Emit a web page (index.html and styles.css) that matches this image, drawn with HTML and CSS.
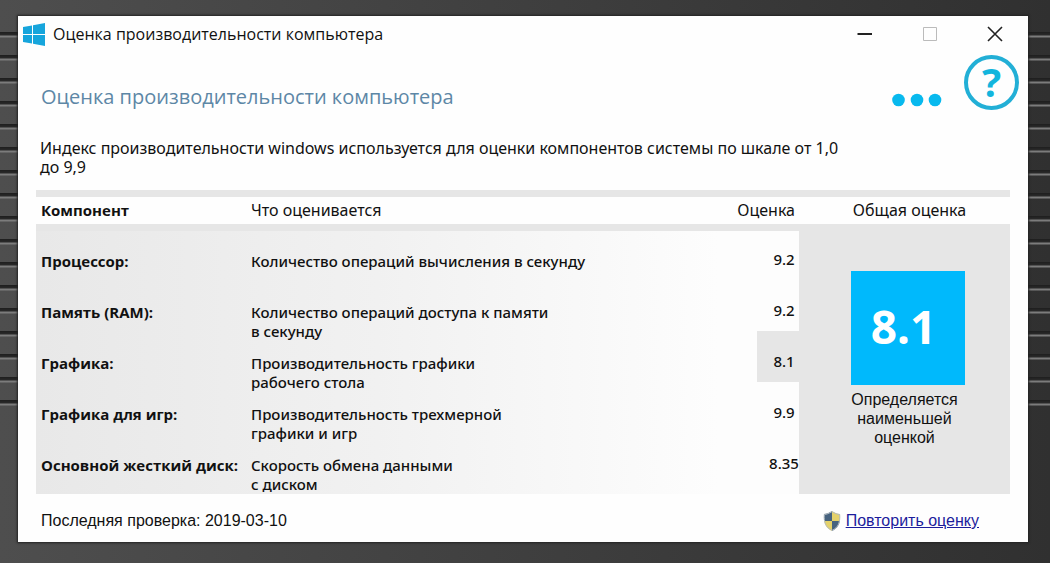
FILE: index.html
```
<!DOCTYPE html>
<html lang="ru">
<head>
    <meta charset="UTF-8">
    <meta name="viewport" content="width=device-width, initial-scale=1.0">
    <title>Оценка производительности компьютера</title>
    <link rel="stylesheet" href="styles.css">
</head>
<body>
    <main class="window">
        <div class="titlebar">
            <svg class="logo" viewBox="0 0 22 23" aria-hidden="true">
                <path d="M0 4 L9 2.5 V11 H0 Z M10 2.3 L22 0 V11 H10 Z M0 12 H9 V20.5 L0 19 Z M10 12 H22 V23 L10 20.7 Z"/>
            </svg>
            <span class="caption">Оценка производительности компьютера</span>
            <div class="window-buttons">
                <button type="button" aria-label="Свернуть">
                    <svg viewBox="0 0 16 16"><path d="M0.5 8 H15" stroke-width="2"/></svg>
                </button>
                <button type="button" aria-label="Развернуть" disabled>
                    <svg viewBox="0 0 16 16"><path d="M1.5 1.5 H14.5 V14.5 H1.5 Z"/></svg>
                </button>
                <button type="button" aria-label="Закрыть">
                    <svg viewBox="0 0 16 16"><path d="M1 1 L15 15 M15 1 L1 15" stroke-width="1.6"/></svg>
                </button>
            </div>
        </div>

        <header class="header">
            <h1>Оценка производительности компьютера</h1>
            <button type="button" class="more" aria-label="Ещё">
                <svg viewBox="0 0 50 14">
                    <circle cx="6.5" cy="7" r="6.3"/>
                    <circle cx="25" cy="7" r="6.3"/>
                    <circle cx="43" cy="7" r="6.3"/>
                </svg>
            </button>
            <button type="button" class="help" aria-label="Справка">?</button>
        </header>

        <p class="intro">Индекс производительности windows используется для оценки компонентов системы по шкале от 1,0 до&nbsp;9,9</p>

        <table class="scores">
            <colgroup>
                <col class="col-name">
                <col>
                <col class="col-score">
                <col class="col-total">
            </colgroup>
            <thead>
                <tr>
                    <th class="strong">Компонент</th>
                    <th>Что оценивается</th>
                    <th class="score-head">Оценка</th>
                    <th class="total-head">Общая оценка</th>
                </tr>
            </thead>
            <tbody>
                <tr class="first">
                    <th>Процессор:</th>
                    <td>Количество операций вычисления в секунду</td>
                    <td><span class="score">9.2</span></td>
                    <td class="total" rowspan="5">
                        <div class="total-value">8.1</div>
                        <p>Определяется<br>наименьшей<br>оценкой</p>
                    </td>
                </tr>
                <tr>
                    <th>Память (RAM):</th>
                    <td>Количество операций доступа к памяти<br>в секунду</td>
                    <td><span class="score">9.2</span></td>
                </tr>
                <tr>
                    <th>Графика:</th>
                    <td>Производительность графики<br>рабочего стола</td>
                    <td><span class="score lowest">8.1</span></td>
                </tr>
                <tr>
                    <th>Графика для игр:</th>
                    <td>Производительность трехмерной<br>графики и игр</td>
                    <td><span class="score">9.9</span></td>
                </tr>
                <tr class="last">
                    <th>Основной жесткий диск:</th>
                    <td>Скорость обмена данными<br>с диском</td>
                    <td><span class="score">8.35</span></td>
                </tr>
            </tbody>
        </table>

        <footer class="footer">
            <span>Последняя проверка: 2019-03-10</span>
            <a href="#">
                <svg class="shield" viewBox="0 0 18 20" aria-hidden="true">
                    <path class="gold" d="M9 0 C12 2 14.5 3 17 3 C17 6 17.2 8 16.8 10 H9 Z"/>
                    <path class="blue" d="M9 0 V10 H1.2 C0.8 8 1 6 1 3 C3.5 3 6 2 9 0 Z"/>
                    <path class="gold" d="M1.2 10 C2 15 5 18 9 20 V10 Z"/>
                    <path class="blue" d="M16.8 10 C16 15 13 18 9 20 V10 Z"/>
                    <path class="rim" d="M9 0.6 C6 2.5 3.5 3.4 1.3 3.5 C0.8 11 2.5 16.5 9 19.4 C15.5 16.5 17.2 11 16.7 3.5 C14.5 3.4 12 2.5 9 0.6 Z"/>
                </svg>
                <span class="link-text">Повторить оценку</span>
            </a>
        </footer>
    </main>
</body>
</html>
```
FILE: styles.css
```
* {
    box-sizing: border-box;
}

body {
    margin: 0;
    padding: 16px 22px 21px 18px;
    min-height: 100vh;
    display: flex;
    font-family: "Noto Sans", "Open Sans", sans-serif;
    font-size: 16px;
    line-height: 19px;
    color: #111;
    background-color: #3a3a3a;
    /* ribbed desktop wallpaper */
    background-image:
        repeating-linear-gradient(to bottom, #1e1e1e 0, #2a2a2a 3px, #7c7c7c 4px, #7c7c7c 5px, transparent 6px, transparent 23px),
        linear-gradient(to right, #4e4e4e, #303030);
    background-size: 100% 378px, 100% 100%;
    background-position: 0 32px, 0 0;
    background-repeat: no-repeat;
}

button {
    padding: 0;
    border: none;
    background: none;
    font-family: inherit;
    cursor: pointer;
}

button svg {
    display: block;
}

.window {
    flex: 1;
    min-width: 0;
    display: flex;
    flex-direction: column;
    background-color: #fefefe;
    box-shadow: 0 0 2px 1px #222;
}

.titlebar {
    display: flex;
    align-items: center;
    height: 36px;
    padding: 0 25px 0 5px;
}

.logo {
    width: 22px;
    height: 23px;
    fill: #16a5dc;
}

.caption {
    flex: 1;
    margin-left: 8px;
    font-family: "Open Sans", sans-serif;
}

.window-buttons {
    display: flex;
    gap: 49px;
}

.window-buttons svg {
    width: 16px;
    height: 16px;
    fill: none;
    stroke: #222;
}

.window-buttons button:disabled svg {
    stroke: #bbb;
}

.header {
    display: flex;
    align-items: center;
    height: 60px;
    padding: 0 9px 0 23px;
}

h1 {
    flex: 1;
    margin: 30px 0 0;
    font-family: "Open Sans", sans-serif;
    font-size: 20px;
    font-weight: normal;
    line-height: 28px;
    color: #5d87a6;
}

.more {
    margin: 36px 22px 0 0;
}

.more svg {
    width: 50px;
    height: 14px;
    fill: #08b9ee;
}

.help {
    width: 55px;
    height: 55px;
    border: 4px solid #22afd6;
    border-radius: 50%;
    font-size: 40px;
    font-weight: bold;
    line-height: 40px;
    color: #12b5dd;
}

.intro {
    max-width: 850px;
    margin: 27px 0 13px;
    padding: 0 22px;
}

.scores {
    margin: 0 18px;
    border-collapse: collapse;
    table-layout: fixed;
}

.col-name {
    width: 210px;
}

.col-score {
    width: 62px;
}

.col-total {
    width: 211px;
}

.scores th,
.scores td {
    padding: 0 0 0 5px;
    text-align: left;
    vertical-align: top;
}

.scores td {
    font-size: 15px;
    font-weight: 500;
}

.scores thead th {
    height: 34px;
    border-top: 7px solid #e6e6e6;
    border-bottom: 7px solid #e6e6e6;
    font-weight: normal;
    vertical-align: middle;
    white-space: nowrap;
}

.scores tbody th,
.scores thead .strong {
    font-family: "Open Sans", sans-serif;
    font-size: 15px;
    font-weight: bold;
}

.scores thead .score-head {
    padding: 0 4px 0 0;
    text-align: right;
}

.scores thead .total-head {
    padding: 0 0 0 10px;
    text-align: center;
}

.scores tbody {
    background: linear-gradient(to right, #e8e8e8 0, #f1f1f1 35%, #fdfdfd 70%);
}

.scores tbody tr {
    height: 51px;
}

.scores tbody .first {
    height: 75px;
}

.scores tbody .last {
    height: 38px;
}

.scores .first th,
.scores .first td {
    padding-top: 21px;
}

.scores td:nth-child(3) {
    padding-left: 0;
}

/* the score box starts above its row's text */
.score {
    display: block;
    width: 42px;
    height: 51px;
    margin: -23px 0 -4px auto;
    padding: 21px 0 0 12px;
    text-align: center;
    white-space: nowrap;
}

.lowest {
    background-color: #e6e6e6;
}

.scores .first .total {
    padding: 40px 0 0 6px;
    text-align: center;
    background-color: #e6e6e6;
}

.total-value {
    width: 114px;
    height: 114px;
    margin: 0 auto;
    padding-right: 8px;
    font-size: 46px;
    font-weight: bold;
    line-height: 110px;
    color: #fff;
    background-color: #00b9fc;
}

.total p {
    margin: 5px 6px 0 0;
    font-family: "Liberation Sans", Arial, sans-serif;
    font-size: 16px;
    font-weight: normal;
}

.footer {
    display: flex;
    justify-content: space-between;
    margin: 17px 49px 10px 23px;
    font-family: "Liberation Sans", Arial, sans-serif;
}

.footer a {
    display: flex;
    align-items: center;
    gap: 5px;
    color: #1c1c9c;
    text-decoration: none;
}

.link-text {
    text-decoration: underline;
}

.shield {
    width: 18px;
    height: 20px;
}

.gold {
    fill: #e5d26a;
}

.blue {
    fill: #47637f;
}

.rim {
    fill: none;
    stroke: #b4bcc0;
}
```
